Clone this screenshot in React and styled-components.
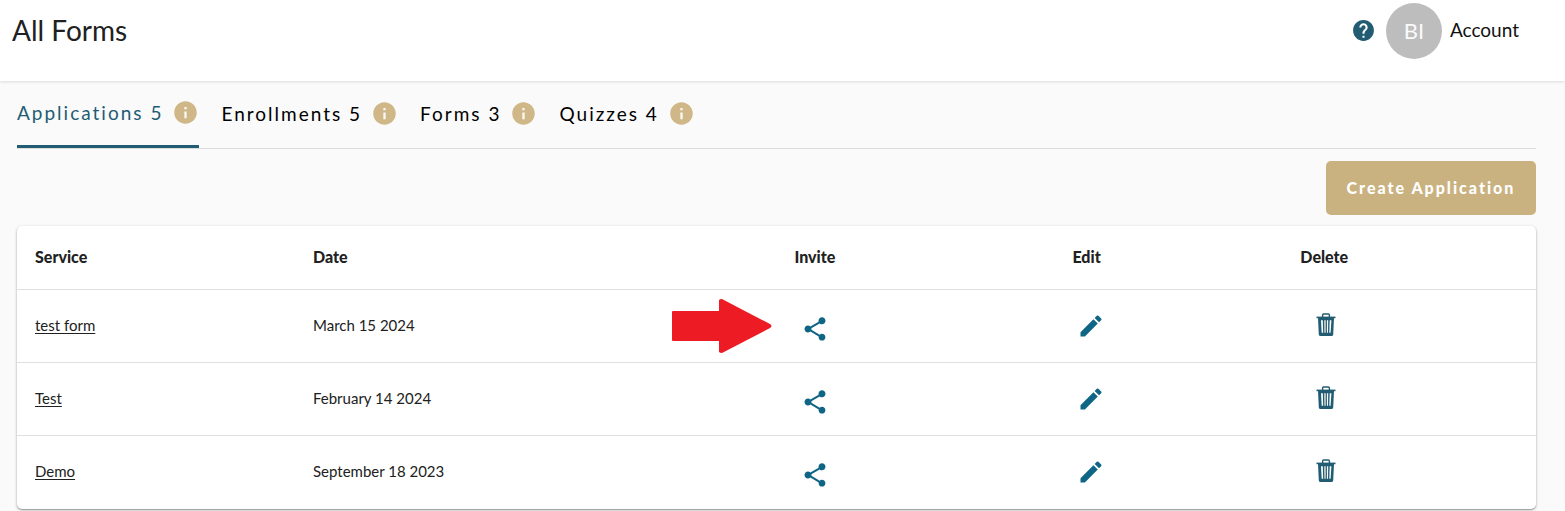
import React, { useState } from 'react';
import styled, { createGlobalStyle } from 'styled-components';
import { MdHelp, MdInfo, MdShare, MdEdit } from 'react-icons/md';

const GlobalStyle = createGlobalStyle`
  * {
    box-sizing: border-box;
  }

  body {
    margin: 0;
    background: #fafafa;
    color: #212121;
    font-family: Avenir, Lato, sans-serif;
  }

  button {
    font-family: inherit;
    border: none;
    background: none;
    padding: 0;
    cursor: pointer;
  }
`;

const TopBar = styled.header`
  display: flex;
  align-items: flex-start;
  justify-content: space-between;
  height: 81px;
  padding: 3px 46px 0 12px;
  background: #fff;
  box-shadow: 0 1px 3px rgba(0, 0, 0, 0.12);
`;

const PageTitle = styled.h1`
  margin: 0;
  font-size: 28px;
  line-height: 54px;
  font-weight: 400;
`;

const AccountArea = styled.div`
  display: flex;
  align-items: center;
`;

const HelpButton = styled.button`
  display: flex;
  margin-right: 10px;
  padding-bottom: 2px;
  color: #225c73;
  font-size: 25px;
`;

const Avatar = styled.div`
  display: flex;
  align-items: center;
  justify-content: center;
  width: 56px;
  height: 56px;
  padding-bottom: 2px;
  border-radius: 50%;
  background: #bdbdbd;
  color: #fafafa;
  font-size: 22px;
`;

const AccountButton = styled.button`
  margin-left: 8px;
  padding-bottom: 3px;
  color: #111;
  font-size: 19px;
  line-height: 24px;
`;

const Content = styled.main`
  padding: 0 29px 16px 17px;
`;

const TabList = styled.div`
  display: flex;
  align-items: stretch;
  gap: 22px;
  height: 68px;
  border-bottom: 1px solid #dcdcdc;
`;

const Tab = styled.button`
  display: flex;
  align-items: center;
  gap: 9px;
  padding-bottom: 2px;
  border-bottom: ${props => props.$active ? '3px solid #225c73' : 'none'};
  color: ${props => props.$active ? '#225c73' : '#000'};
  font-size: 19px;
  letter-spacing: 2px;

  svg {
    color: #d0b787;
    font-size: 27px;
  }
`;

const Actions = styled.div`
  display: flex;
  justify-content: flex-end;
  padding: 12px 0 11px;
`;

const CreateButton = styled.button`
  height: 54px;
  min-width: 210px;
  padding-bottom: 2px;
  border-radius: 5px;
  background: #c9b180;
  color: #fff;
  font-size: 16px;
  font-weight: 900;
  letter-spacing: 2px;
`;

const Table = styled.table`
  width: 100%;
  table-layout: fixed;
  border-spacing: 0;
  border-radius: 5px;
  background: #fff;
  box-shadow: 0 1px 3px rgba(0, 0, 0, 0.3), 0 1px 1px rgba(0, 0, 0, 0.2);
`;

const HeadCell = styled.th`
  width: ${props => props.$width};
  height: 64px;
  padding: 0 18px 3px;
  border-bottom: 1px solid #e0e0e0;
  text-align: left;
  font-size: 16px;
  font-weight: 900;
`;

const Cell = styled.td`
  position: relative;
  height: 73px;
  padding: 0 18px 2px;
  border-bottom: 1px solid #e0e0e0;
  font-size: 15px;

  tr:last-child > & {
    border-bottom-color: transparent;
  }
`;

const FormLink = styled.a`
  color: inherit;
  text-underline-offset: 2px;
`;

const IconButton = styled.button`
  display: flex;
  padding: ${props => props.$padding};
  color: #0f6585;
  font-size: 28px;
`;

const Arrow = styled.svg`
  position: absolute;
  right: 100%;
  top: 9px;
  width: 100px;
  height: 54px;
  margin-right: 4px;
  fill: #ed1c24;
`;

const TrashIcon = () => (
  <svg width="20" height="24" viewBox="0 0 20 24" fill="none" aria-hidden="true">
    <path d="M6.6 4V2.1Q6.6 1 7.7 1H12.3Q13.4 1 13.4 2.1V4" stroke="#225c73" strokeWidth="1.4" />
    <path d="M.5 3.6H19.5V5.2H.5Z" fill="#225c73" />
    <path
      fillRule="evenodd"
      d="M2 5H18L17.2 21.4Q17.1 23 15.4 23H4.6Q2.9 23 2.8 21.4ZM5 7.3L5.7 19.8H7.2L6.8 7.3ZM8.3 7.3L8.5 19.8H9.6V7.3ZM10.9 7.3V19.8H12L12.2 7.3ZM13.7 7.3L13.3 19.8H14.6L15.4 7.3Z"
      fill="#225c73"
    />
  </svg>
);

const tabs = [
  { name: 'Applications', count: 5 },
  { name: 'Enrollments', count: 5 },
  { name: 'Forms', count: 3 },
  { name: 'Quizzes', count: 4 },
];

const columns = [
  { label: 'Service', width: '18.3%' },
  { label: 'Date', width: '31.7%' },
  { label: 'Invite', width: '18.3%' },
  { label: 'Edit', width: '15%' },
  { label: 'Delete', width: '16.7%' },
];

const forms = [
  { service: 'test form', date: 'March 15 2024', highlighted: true },
  { service: 'Test', date: 'February 14 2024' },
  { service: 'Demo', date: 'September 18 2023' },
];

const App = () => {
  const [activeTab, setActiveTab] = useState('Applications');

  return (
    <>
      <GlobalStyle />
      <TopBar>
        <PageTitle>All Forms</PageTitle>
        <AccountArea>
          <HelpButton aria-label="Help"><MdHelp /></HelpButton>
          <Avatar>BI</Avatar>
          <AccountButton>Account</AccountButton>
        </AccountArea>
      </TopBar>

      <Content>
        <TabList role="tablist">
          {tabs.map(tab => (
            <Tab
              key={tab.name}
              role="tab"
              aria-selected={tab.name === activeTab}
              $active={tab.name === activeTab}
              onClick={() => setActiveTab(tab.name)}
            >
              {tab.name} {tab.count}
              <MdInfo />
            </Tab>
          ))}
        </TabList>

        <Actions>
          <CreateButton>Create Application</CreateButton>
        </Actions>

        <Table>
          <thead>
            <tr>
              {columns.map(column => (
                <HeadCell key={column.label} $width={column.width}>{column.label}</HeadCell>
              ))}
            </tr>
          </thead>
          <tbody>
            {forms.map(form => (
              <tr key={form.service}>
                <Cell><FormLink href="#">{form.service}</FormLink></Cell>
                <Cell>{form.date}</Cell>
                <Cell>
                  {form.highlighted && (
                    <Arrow viewBox="0 0 100 54" aria-hidden="true">
                      <path d="M1 12H47V1Q48 0 50 0L98 25Q101 27 98 29L50 54Q48 54 47 53V42H1Q0 42 0 41V13Q0 12 1 12Z" />
                    </Arrow>
                  )}
                  <IconButton aria-label="Invite" $padding="7px 7px 0"><MdShare /></IconButton>
                </Cell>
                <Cell>
                  <IconButton aria-label="Edit" $padding="1px 5px 0"><MdEdit /></IconButton>
                </Cell>
                <Cell>
                  <IconButton aria-label="Delete" $padding="0 16px"><TrashIcon /></IconButton>
                </Cell>
              </tr>
            ))}
          </tbody>
        </Table>
      </Content>
    </>
  );
};

export default App;
